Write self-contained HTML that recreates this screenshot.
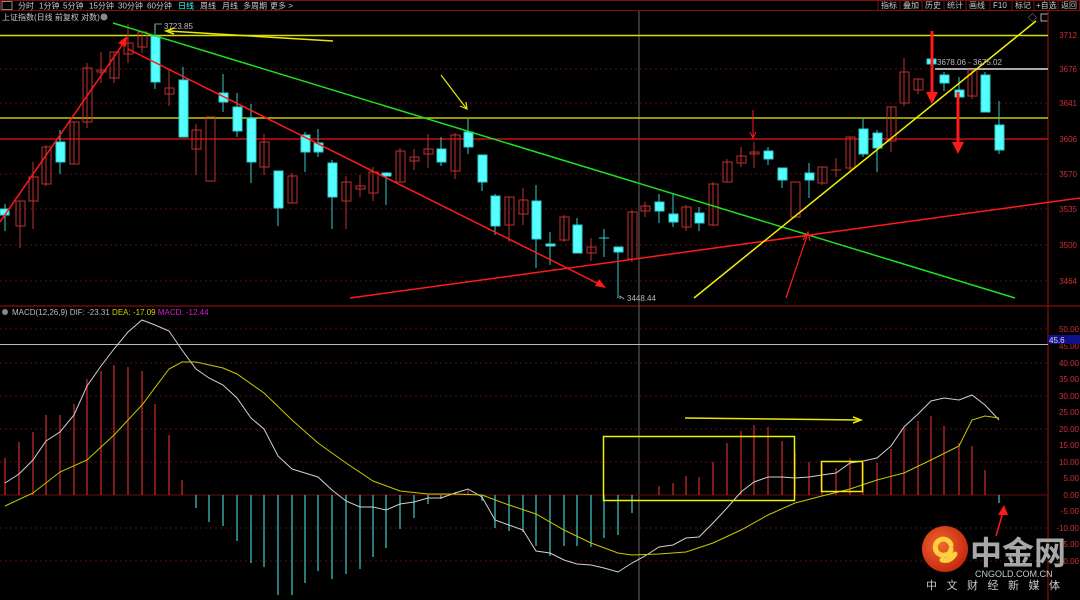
<!DOCTYPE html>
<html><head><meta charset="utf-8"><style>
body{margin:0;background:#000;width:1080px;height:600px;overflow:hidden;font-family:"Liberation Sans","Noto Sans CJK SC",sans-serif}
svg{position:absolute;left:0;top:0}
</style></head><body>
<svg width="1080" height="600" viewBox="0 0 1080 600" xmlns="http://www.w3.org/2000/svg" font-family="Liberation Sans, Noto Sans CJK SC, sans-serif">
<rect width="1080" height="600" fill="#000"/>
<!-- toolbar -->
<rect x="0.5" y="0.5" width="1079" height="10" fill="#000" stroke="#7a1010"/>
<rect x="2" y="1.5" width="10" height="8" fill="none" stroke="#aaa" stroke-width="0.8"/>
<g font-size="8" fill="#c8c8c8">
<text x="18" y="8.5">分时</text><text x="39" y="8.5">1分钟</text><text x="63" y="8.5">5分钟</text><text x="89" y="8.5">15分钟</text><text x="118" y="8.5">30分钟</text><text x="147" y="8.5">60分钟</text><text x="178" y="8.5" fill="#3ff">日线</text><text x="200" y="8.5">周线</text><text x="222" y="8.5">月线</text><text x="243" y="8.5">多周期</text><text x="270" y="8.5">更多 &gt;</text>
<text x="881" y="8">指标</text><text x="903" y="8">叠加</text><text x="925" y="8">历史</text><text x="947" y="8">统计</text><text x="969" y="8">画线</text><text x="993" y="8">F10</text><text x="1015" y="8">标记</text><text x="1036" y="8">+自选</text><text x="1061" y="8">返回</text>
</g>
<g stroke="#7a1010"><line x1="878" y1="0" x2="878" y2="11"/><line x1="900" y1="0" x2="900" y2="11"/><line x1="922" y1="0" x2="922" y2="11"/><line x1="944" y1="0" x2="944" y2="11"/><line x1="966" y1="0" x2="966" y2="11"/><line x1="990" y1="0" x2="990" y2="11"/><line x1="1012" y1="0" x2="1012" y2="11"/><line x1="1034" y1="0" x2="1034" y2="11"/><line x1="1058" y1="0" x2="1058" y2="11"/></g>
<text x="2" y="20" font-size="8" fill="#c8c8c8">上证指数(日线 前复权 对数)</text>
<circle cx="104" cy="17" r="3.5" fill="#888"/>
<text x="1028" y="21" font-size="9" fill="#aaa">◇</text><rect x="1041" y="14" width="7" height="7" fill="none" stroke="#aaa"/>
<!-- grid -->
<g stroke="#5a1010" stroke-dasharray="2,3"><line x1="0" y1="69" x2="1048" y2="69"/><line x1="0" y1="103" x2="1048" y2="103"/><line x1="0" y1="174" x2="1048" y2="174"/><line x1="0" y1="209" x2="1048" y2="209"/><line x1="0" y1="245" x2="1048" y2="245"/><line x1="0" y1="281" x2="1048" y2="281"/>
<line x1="0" y1="329" x2="1048" y2="329"/><line x1="0" y1="363" x2="1048" y2="363"/><line x1="0" y1="396" x2="1048" y2="396"/><line x1="0" y1="429" x2="1048" y2="429"/><line x1="0" y1="462" x2="1048" y2="462"/><line x1="0" y1="528" x2="1048" y2="528"/><line x1="0" y1="561" x2="1048" y2="561"/></g>
<line x1="1048" y1="11" x2="1048" y2="600" stroke="#a01010"/>
<line x1="0" y1="306" x2="1080" y2="306" stroke="#a01010"/>
<line x1="639" y1="11" x2="639" y2="600" stroke="#666"/>
<line x1="0" y1="495" x2="1048" y2="495" stroke="#6a1010"/>
<!-- axis labels -->
<g font-size="8" fill="#d03030" text-anchor="end">
<text x="1077" y="38">3712</text><text x="1077" y="72">3676</text><text x="1077" y="106">3641</text><text x="1077" y="142">3606</text><text x="1077" y="177">3570</text><text x="1077" y="212">3535</text><text x="1077" y="248">3500</text><text x="1077" y="284">3464</text>
<text x="1079" y="332">50.00</text><text x="1079" y="349">45.00</text><text x="1079" y="366">40.00</text><text x="1079" y="382">35.00</text><text x="1079" y="399">30.00</text><text x="1079" y="415">25.00</text><text x="1079" y="432">20.00</text><text x="1079" y="448">15.00</text><text x="1079" y="465">10.00</text><text x="1079" y="481">5.00</text><text x="1079" y="498">0.00</text><text x="1079" y="514">-5.00</text><text x="1079" y="531">-10.00</text><text x="1079" y="547">-15.00</text><text x="1079" y="564">-20.00</text>
</g>
<line x1="0" y1="344.5" x2="1048" y2="344.5" stroke="#bbb"/>
<rect x="1048" y="335" width="32" height="9" fill="#10108a"/><text x="1049" y="343" font-size="8" fill="#ddd">45.6</text>
<!-- horizontal lines -->
<line x1="0" y1="35.5" x2="1048" y2="35.5" stroke="#dcdc00" stroke-width="1.5"/>
<line x1="0" y1="118" x2="1048" y2="118" stroke="#c8c800" stroke-width="1.5"/>
<line x1="0" y1="139" x2="1048" y2="139" stroke="#c81010" stroke-width="1.5"/>
<line x1="935" y1="69" x2="1048" y2="69" stroke="#aaa" stroke-width="2"/>
<!-- candles -->
<g stroke-width="1">
<g stroke="#c03030" fill="none">
<line x1="20" y1="201" x2="20" y2="248"/><rect x="16" y="201" width="9" height="25"/>
<line x1="33" y1="162" x2="33" y2="229"/><rect x="29" y="177" width="9" height="24"/>
<line x1="46" y1="145" x2="46" y2="186"/><rect x="42" y="147" width="9" height="37"/>
<line x1="74" y1="122" x2="74" y2="164"/><rect x="70" y="122" width="9" height="42"/>
<line x1="87" y1="63" x2="87" y2="128"/><rect x="83" y="68" width="9" height="54"/>
<line x1="101" y1="52" x2="101" y2="83"/><rect x="97" y="70" width="9" height="2"/>
<line x1="114" y1="52" x2="114" y2="83"/><rect x="110" y="52" width="9" height="26"/>
<line x1="128" y1="24" x2="128" y2="63"/><rect x="124" y="43" width="9" height="11"/>
<line x1="142" y1="32" x2="142" y2="53"/><rect x="138" y="32" width="9" height="15"/>
<line x1="169" y1="70" x2="169" y2="106"/><rect x="165" y="88" width="9" height="6"/>
<line x1="196" y1="124" x2="196" y2="175"/><rect x="192" y="130" width="9" height="19"/>
<rect x="206" y="117" width="9" height="64"/>
<line x1="264" y1="134" x2="264" y2="175"/><rect x="260" y="142" width="9" height="25"/>
<line x1="292" y1="173" x2="292" y2="203"/><rect x="288" y="176" width="9" height="27"/>
<line x1="346" y1="176" x2="346" y2="229"/><rect x="342" y="182" width="9" height="19"/>
<line x1="360" y1="175" x2="360" y2="197"/><rect x="356" y="186" width="9" height="3"/>
<line x1="373" y1="167" x2="373" y2="201"/><rect x="369" y="172" width="9" height="21"/>
<line x1="400" y1="148" x2="400" y2="182"/><rect x="396" y="151" width="9" height="31"/>
<line x1="414" y1="149" x2="414" y2="170"/><rect x="410" y="157" width="9" height="4"/>
<line x1="428" y1="134" x2="428" y2="168"/><rect x="424" y="149" width="9" height="5"/>
<line x1="455" y1="133" x2="455" y2="179"/><rect x="451" y="135" width="9" height="36"/>
<line x1="509" y1="197" x2="509" y2="242"/><rect x="505" y="197" width="9" height="28"/>
<line x1="523" y1="188" x2="523" y2="225"/><rect x="519" y="200" width="9" height="14"/>
<line x1="564" y1="215" x2="564" y2="242"/><rect x="560" y="217" width="9" height="23"/>
<line x1="591" y1="238" x2="591" y2="261"/><rect x="587" y="247" width="9" height="6"/>
<line x1="632" y1="210" x2="632" y2="262"/><rect x="628" y="212" width="9" height="47"/>
<line x1="645" y1="202" x2="645" y2="217"/><rect x="641" y="206" width="9" height="5"/>
<line x1="686" y1="205" x2="686" y2="231"/><rect x="682" y="207" width="9" height="20"/>
<line x1="713" y1="182" x2="713" y2="226"/><rect x="709" y="184" width="9" height="41"/>
<line x1="727" y1="159" x2="727" y2="182"/><rect x="723" y="162" width="9" height="20"/>
<line x1="741" y1="147" x2="741" y2="167"/><rect x="737" y="156" width="9" height="7"/>
<line x1="754" y1="142" x2="754" y2="168"/><rect x="750" y="152" width="9" height="2"/>
<rect x="791" y="182" width="9" height="35"/>
<line x1="822" y1="167" x2="822" y2="185"/><rect x="818" y="167" width="9" height="16"/>
<line x1="836" y1="158" x2="836" y2="177"/><line x1="831" y1="170" x2="841" y2="170"/>
<line x1="850" y1="137" x2="850" y2="171"/><rect x="846" y="137" width="9" height="31"/>
<line x1="891" y1="107" x2="891" y2="152"/><rect x="887" y="107" width="9" height="34"/>
<line x1="904" y1="58" x2="904" y2="106"/><rect x="900" y="72" width="9" height="31"/>
<line x1="918" y1="79" x2="918" y2="94"/><rect x="914" y="79" width="9" height="11"/>
<line x1="972" y1="70" x2="972" y2="99"/><rect x="968" y="70" width="9" height="26"/>
</g>
<g stroke="#3cc" fill="#54ffff">
<line x1="5" y1="204" x2="5" y2="231"/><rect x="0" y="209" width="9" height="6"/>
<line x1="60" y1="130" x2="60" y2="174"/><rect x="56" y="142" width="9" height="20"/>
<line x1="155" y1="25" x2="155" y2="89"/><rect x="151" y="36" width="9" height="46"/>
<line x1="183" y1="67" x2="183" y2="137"/><rect x="179" y="80" width="9" height="57"/>
<line x1="223" y1="74" x2="223" y2="112"/><rect x="219" y="93" width="9" height="9"/>
<line x1="237" y1="93" x2="237" y2="137"/><rect x="233" y="107" width="9" height="24"/>
<line x1="251" y1="104" x2="251" y2="183"/><rect x="247" y="118" width="9" height="44"/>
<line x1="278" y1="171" x2="278" y2="226"/><rect x="274" y="171" width="9" height="37"/>
<line x1="305" y1="132" x2="305" y2="172"/><rect x="301" y="135" width="9" height="17"/>
<line x1="318" y1="129" x2="318" y2="157"/><rect x="314" y="143" width="9" height="9"/>
<line x1="332" y1="160" x2="332" y2="229"/><rect x="328" y="163" width="9" height="34"/>
<line x1="386" y1="172" x2="386" y2="205"/><rect x="382" y="173" width="9" height="3"/>
<line x1="441" y1="137" x2="441" y2="166"/><rect x="437" y="149" width="9" height="13"/>
<line x1="468" y1="119" x2="468" y2="154"/><rect x="464" y="132" width="9" height="15"/>
<line x1="482" y1="155" x2="482" y2="191"/><rect x="478" y="155" width="9" height="27"/>
<line x1="495" y1="194" x2="495" y2="235"/><rect x="491" y="196" width="9" height="30"/>
<line x1="536" y1="185" x2="536" y2="268"/><rect x="532" y="201" width="9" height="38"/>
<line x1="550" y1="232" x2="550" y2="265"/><rect x="546" y="244" width="9" height="2"/>
<line x1="577" y1="218" x2="577" y2="253"/><rect x="573" y="225" width="9" height="28"/>
<line x1="604" y1="229" x2="604" y2="257"/><line x1="599" y1="238" x2="609" y2="238"/>
<line x1="618" y1="247" x2="618" y2="298"/><rect x="614" y="247" width="9" height="5"/>
<line x1="659" y1="194" x2="659" y2="223"/><rect x="655" y="202" width="9" height="9"/>
<line x1="673" y1="194" x2="673" y2="227"/><rect x="669" y="214" width="9" height="8"/>
<line x1="699" y1="207" x2="699" y2="231"/><rect x="695" y="213" width="9" height="10"/>
<line x1="768" y1="147" x2="768" y2="165"/><rect x="764" y="151" width="9" height="8"/>
<line x1="782" y1="168" x2="782" y2="188"/><rect x="778" y="168" width="9" height="12"/>
<line x1="809" y1="163" x2="809" y2="198"/><rect x="805" y="173" width="9" height="7"/>
<line x1="863" y1="119" x2="863" y2="157"/><rect x="859" y="129" width="9" height="25"/>
<line x1="877" y1="130" x2="877" y2="172"/><rect x="873" y="133" width="9" height="15"/>
<line x1="931" y1="37" x2="931" y2="64"/><rect x="927" y="59" width="9" height="5"/>
<line x1="944" y1="72" x2="944" y2="91"/><rect x="940" y="75" width="9" height="8"/>
<line x1="959" y1="77" x2="959" y2="97"/><rect x="955" y="90" width="9" height="7"/>
<line x1="985" y1="72" x2="985" y2="112"/><rect x="981" y="75" width="9" height="37"/>
<line x1="999" y1="101" x2="999" y2="154"/><rect x="995" y="125" width="9" height="25"/>
</g>
</g>
<!-- trend lines -->
<line x1="113" y1="23" x2="1015" y2="298" stroke="#1ee01e" stroke-width="1.5"/>
<line x1="0" y1="222" x2="127" y2="38" stroke="#ff1a1a" stroke-width="1.5"/>
<polygon points="127,36 118,43 126,47" fill="#ff1a1a"/>
<line x1="128" y1="49" x2="603" y2="286" stroke="#ff1a1a" stroke-width="1.5"/>
<polygon points="606,288 595,286 599,279" fill="#ff1a1a"/>
<line x1="350" y1="298" x2="1080" y2="198" stroke="#ff1a1a" stroke-width="1.5"/>
<line x1="694" y1="298" x2="1036" y2="21" stroke="#f0f000" stroke-width="1.5"/>
<line x1="333" y1="41" x2="168" y2="31" stroke="#e8e800" stroke-width="1.5"/>
<polyline points="174,28 166,31 174,34" fill="none" stroke="#e8e800" stroke-width="1.5"/>
<line x1="441" y1="75" x2="466" y2="108" stroke="#e8e800" stroke-width="1.2"/>
<polyline points="460,106 467,109 466,102" fill="none" stroke="#e8e800" stroke-width="1.2"/>
<line x1="753" y1="110" x2="753" y2="137" stroke="#ff1a1a"/>
<polyline points="750,132 753,138 756,132" fill="none" stroke="#ff1a1a"/>
<line x1="932" y1="31" x2="932" y2="95" stroke="#ff1a1a" stroke-width="3"/>
<polygon points="926,92 938,92 932,104" fill="#ff1a1a"/>
<line x1="958" y1="92" x2="958" y2="144" stroke="#ff1a1a" stroke-width="3"/>
<polygon points="952,142 964,142 958,154" fill="#ff1a1a"/>
<line x1="786" y1="298" x2="807" y2="236" stroke="#ff1a1a" stroke-width="1.2"/>
<polyline points="803,240 808,232 810,241" fill="none" stroke="#ff1a1a" stroke-width="1.2"/>
<g font-size="8" fill="#bbb"><text x="164" y="29">3723.85</text><text x="627" y="301">3448.44</text><text x="937" y="65">3678.06 - 3675.02</text></g>
<polyline points="155,30 155,24 162,24" fill="none" stroke="#bbb" stroke-width="0.8"/>
<polyline points="620,299 620,296 624,299" fill="none" stroke="#bbb" stroke-width="0.8"/>
<!-- MACD -->
<circle cx="5" cy="312" r="3" fill="#888"/>
<text x="12" y="315" font-size="8" fill="#bbb">MACD(12,26,9) DIF: -23.31 <tspan fill="#d0d000">DEA: -17.09</tspan> <tspan fill="#d020d0">MACD: -12.44</tspan></text>
<g stroke="#c02828" stroke-width="1.3">
<line x1="5" y1="495" x2="5" y2="458"/><line x1="19" y1="495" x2="19" y2="442"/><line x1="33" y1="495" x2="33" y2="432"/><line x1="46" y1="495" x2="46" y2="415"/><line x1="60" y1="495" x2="60" y2="415"/><line x1="74" y1="495" x2="74" y2="404"/><line x1="87" y1="495" x2="87" y2="379"/><line x1="101" y1="495" x2="101" y2="371"/><line x1="114" y1="495" x2="114" y2="365"/><line x1="128" y1="495" x2="128" y2="367"/><line x1="142" y1="495" x2="142" y2="371"/><line x1="155" y1="495" x2="155" y2="404"/><line x1="169" y1="495" x2="169" y2="435"/><line x1="182" y1="495" x2="182" y2="480"/>
<line x1="455" y1="495" x2="455" y2="492"/><line x1="468" y1="495" x2="468" y2="490"/>
<line x1="659" y1="495" x2="659" y2="486"/><line x1="673" y1="495" x2="673" y2="483"/><line x1="686" y1="495" x2="686" y2="476"/><line x1="699" y1="495" x2="699" y2="477"/><line x1="713" y1="495" x2="713" y2="462"/><line x1="727" y1="495" x2="727" y2="443"/><line x1="741" y1="495" x2="741" y2="431"/><line x1="754" y1="495" x2="754" y2="425"/><line x1="768" y1="495" x2="768" y2="427"/><line x1="782" y1="495" x2="782" y2="441"/><line x1="795" y1="495" x2="795" y2="453"/><line x1="809" y1="495" x2="809" y2="462"/><line x1="822" y1="495" x2="822" y2="464"/><line x1="836" y1="495" x2="836" y2="468"/><line x1="850" y1="495" x2="850" y2="458"/><line x1="863" y1="495" x2="863" y2="463"/><line x1="877" y1="495" x2="877" y2="463"/><line x1="891" y1="495" x2="891" y2="449"/><line x1="904" y1="495" x2="904" y2="428"/><line x1="918" y1="495" x2="918" y2="421"/><line x1="931" y1="495" x2="931" y2="416"/><line x1="944" y1="495" x2="944" y2="426"/><line x1="959" y1="495" x2="959" y2="443"/><line x1="972" y1="495" x2="972" y2="446"/><line x1="985" y1="495" x2="985" y2="470"/>
</g>
<g stroke="#3cbcbc" stroke-width="1.3">
<line x1="196" y1="495" x2="196" y2="508"/><line x1="209" y1="495" x2="209" y2="522"/><line x1="223" y1="495" x2="223" y2="526"/><line x1="237" y1="495" x2="237" y2="541"/><line x1="251" y1="495" x2="251" y2="563"/><line x1="264" y1="495" x2="264" y2="567"/><line x1="278" y1="495" x2="278" y2="595"/><line x1="292" y1="495" x2="292" y2="595"/><line x1="305" y1="495" x2="305" y2="583"/><line x1="318" y1="495" x2="318" y2="571"/><line x1="332" y1="495" x2="332" y2="579"/><line x1="346" y1="495" x2="346" y2="574"/><line x1="360" y1="495" x2="360" y2="569"/><line x1="373" y1="495" x2="373" y2="557"/><line x1="386" y1="495" x2="386" y2="548"/><line x1="400" y1="495" x2="400" y2="529"/><line x1="414" y1="495" x2="414" y2="518"/><line x1="428" y1="495" x2="428" y2="504"/><line x1="441" y1="495" x2="441" y2="499"/><line x1="482" y1="495" x2="482" y2="501"/><line x1="495" y1="495" x2="495" y2="528"/><line x1="509" y1="495" x2="509" y2="531"/><line x1="523" y1="495" x2="523" y2="532"/><line x1="536" y1="495" x2="536" y2="546"/><line x1="550" y1="495" x2="550" y2="556"/><line x1="564" y1="495" x2="564" y2="546"/><line x1="577" y1="495" x2="577" y2="546"/><line x1="591" y1="495" x2="591" y2="547"/><line x1="604" y1="495" x2="604" y2="538"/><line x1="618" y1="495" x2="618" y2="535"/><line x1="632" y1="495" x2="632" y2="513"/><line x1="999" y1="495" x2="999" y2="503"/>
</g>
<polyline fill="none" stroke="#d0d0d0" stroke-width="1" points="5,483 19,474 33,460 46,441 60,432 74,415 87,386 101,366 114,349 128,332 142,320 155,325 169,331 182,350 196,369 209,378 223,385 237,398 251,418 264,429 278,456 292,469 305,473 318,477 332,490 346,501 360,507 373,507 386,510 400,504 414,502 428,498 441,498 455,493 468,489 482,497 495,520 509,525 523,530 536,551 550,553 564,560 577,564 591,565 604,568 618,572 632,563 645,556 659,547 673,545 686,538 699,537 713,523 727,508 741,492 754,482 768,477 782,477 795,478 809,477 822,475 836,473 850,463 863,461 877,458 891,446 904,427 918,414 931,401 944,398 959,400 972,395 985,405 999,420"/>
<polyline fill="none" stroke="#c8c800" stroke-width="1" points="5,506 33,493 60,472 87,460 114,435 142,405 169,369 182,362 196,362 223,368 237,374 264,393 292,420 318,443 346,463 373,481 400,491 428,494 455,494 482,495 509,505 536,514 564,530 591,543 618,553 632,555 659,554 686,552 713,543 741,530 768,515 795,503 822,496 850,489 877,480 904,473 931,460 959,446 972,420 985,416 999,418"/>
<rect x="603.5" y="436.5" width="191" height="64" fill="none" stroke="#f0f000" stroke-width="1.5"/>
<rect x="821.5" y="461.5" width="41" height="30" fill="none" stroke="#f0f000" stroke-width="1.5"/>
<line x1="685" y1="418" x2="860" y2="420" stroke="#e8e800" stroke-width="1.5"/>
<polyline points="853,417 861,420 853,423" fill="none" stroke="#e8e800" stroke-width="1.5"/>
<line x1="996" y1="536" x2="1003" y2="512" stroke="#ff1a1a" stroke-width="1.5"/>
<polygon points="1004,505 998,515 1008,515" fill="#ff1a1a"/>
<!-- logo -->
<defs><radialGradient id="g" cx="0.4" cy="0.4" r="0.7"><stop offset="0" stop-color="#f06a2a"/><stop offset="1" stop-color="#c0200e"/></radialGradient></defs>
<circle cx="945" cy="549" r="23" fill="url(#g)"/>
<path d="M951 545 a8 8 0 1 0 -6 10 q5 0 6 -6 M942 560 q8 2 13 -6" fill="none" stroke="#ffd040" stroke-width="5" stroke-linecap="round"/>
<text x="970" y="564" font-size="32" font-weight="bold" fill="#a8a8a8" font-family="Noto Sans CJK SC, sans-serif">中金网</text>
<text x="975" y="577" font-size="9" fill="#c8c8c8">CNGOLD.COM.CN</text>
<text x="926" y="589" font-size="11" fill="#c8c8c8" letter-spacing="9.5" font-family="Noto Sans CJK SC, sans-serif">中文财经新媒体</text>
</svg>
</body></html>
